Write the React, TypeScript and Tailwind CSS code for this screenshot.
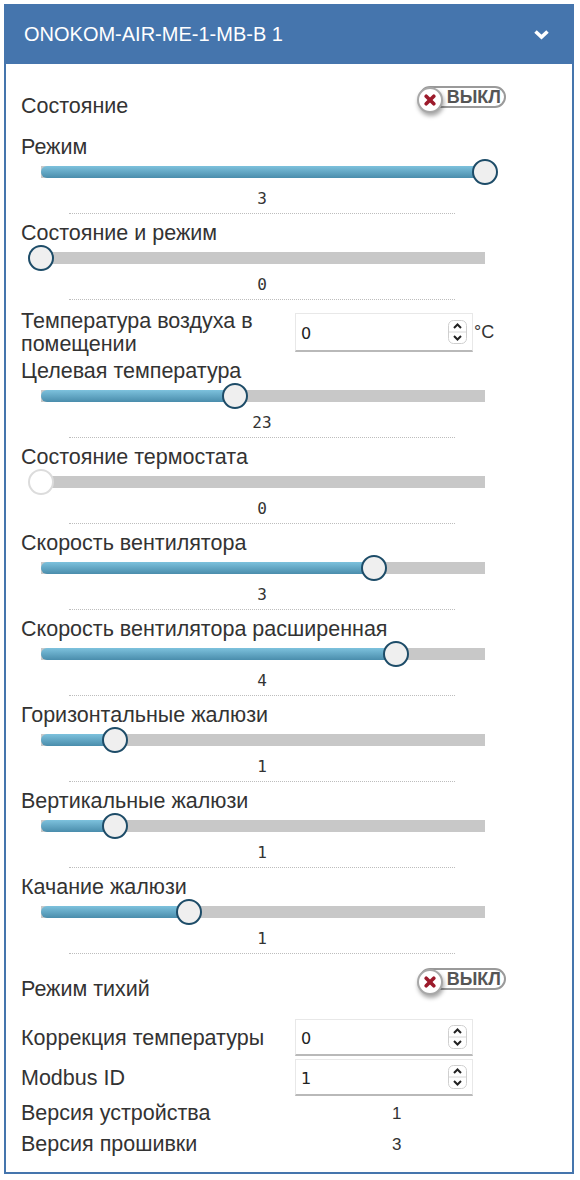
import React from 'react';

type SliderDef = {
  label: string;
  value: number;
  min: number;
  max: number;
  disabled?: boolean;
};

const TRACK = 444;

const topSliders: SliderDef[] = [
  { label: 'Режим', value: 3, min: 0, max: 3 },
  { label: 'Состояние и режим', value: 0, min: 0, max: 3 },
];

const sliders: SliderDef[] = [
  { label: 'Целевая температура', value: 23, min: 16, max: 32 },
  { label: 'Состояние термостата', value: 0, min: 0, max: 1, disabled: true },
  { label: 'Скорость вентилятора', value: 3, min: 0, max: 4 },
  { label: 'Скорость вентилятора расширенная', value: 4, min: 0, max: 5 },
  { label: 'Горизонтальные жалюзи', value: 1, min: 0, max: 6 },
  { label: 'Вертикальные жалюзи', value: 1, min: 0, max: 6 },
  { label: 'Качание жалюзи', value: 1, min: 0, max: 3 },
];

function Slider({ label, value, min, max, disabled }: SliderDef) {
  const pos = Math.round(((value - min) / (max - min)) * TRACK);
  return (
    <div className="mb-[8px]">
      <div className="h-[23px] whitespace-nowrap text-[21.5px] leading-[23px] text-[#333]">{label}</div>
      <div className="relative ml-[20px] h-[26px] w-[444px] pt-[7px]">
        <div className="h-[12px] w-full bg-[#c8c8c8]">
          <div
            className="h-[12px] rounded-l-[6px] bg-gradient-to-b from-[#7dc2dd] to-[#4a8dac]"
            style={{ width: pos }}
          />
        </div>
        {/* thumb */}
        <div
          className={`absolute top-0 -ml-[13px] h-[26px] w-[26px] rounded-full border-2 ${
            disabled ? 'border-[#dcdcdc] bg-white' : 'border-[#1d4c68] bg-[#efefef]'
          }`}
          style={{ left: pos }}
        />
      </div>
      <div className="ml-[48px] mt-[3px] w-[386px] border-b border-dotted border-[#bdbdbd] pb-[3px] text-center font-['DejaVu_Sans_Mono',monospace] text-[16px] leading-[22px] text-[#333]">
        {value}
      </div>
    </div>
  );
}

function Toggle() {
  return (
    <div className="relative h-[27px] w-[89px]">
      <div className="absolute left-[2px] top-0 flex h-[22px] w-[87px] items-center justify-end rounded-full border-2 border-[#9a9a9a] bg-white pr-[3px] text-[18px] font-bold text-[#555]">
        ВЫКЛ
      </div>
      <div className="absolute left-0 top-[1px] flex h-[26px] w-[26px] items-center justify-center rounded-full border-2 border-[#a8a8a8] bg-white shadow-[1px_3px_4px_rgba(0,0,0,0.35)]">
        <svg width="12" height="12" viewBox="0 0 12 12">
          <path d="M2.2 2.2 L9.8 9.8 M9.8 2.2 L2.2 9.8" stroke="#9c1a2b" strokeWidth="3.6" strokeLinecap="round" />
        </svg>
      </div>
    </div>
  );
}

function Spinner() {
  return (
    <svg width="19" height="24" viewBox="0 0 19 24">
      <rect x="0.5" y="0.5" width="18" height="23" rx="5" fill="white" stroke="#cfcfcf" />
      <line x1="1" y1="12" x2="18" y2="12" stroke="#d8d8d8" />
      <path d="M6 8 L9.5 4.5 L13 8" fill="none" stroke="#222" strokeWidth="2" />
      <path d="M6 16 L9.5 19.5 L13 16" fill="none" stroke="#222" strokeWidth="2" />
    </svg>
  );
}

function NumberInput({ value, tall }: { value: string; tall?: boolean }) {
  return (
    <div
      className={`flex w-[178px] items-center justify-between border border-[#e8e8e8] border-b-2 border-b-[#b9b9b9] pl-[5px] pr-[5px] font-['DejaVu_Sans',sans-serif] text-[16px] text-[#222] ${
        tall ? 'h-[39px]' : 'h-[37px]'
      }`}
    >
      <span className="pt-[3px]">{value}</span>
      <Spinner />
    </div>
  );
}

export default function App() {
  return (
    <div className="pl-[4px] pt-[4px] font-['Liberation_Sans',Arial,sans-serif]">
      <div className="w-[570px]">
        {/* Header */}
        <div className="flex h-[60px] items-center justify-between bg-[#4575ad] pl-[20px] pr-[24px]">
          <span className="text-[20px] text-white">ONOKOM-AIR-ME-1-MB-B 1</span>
          <svg width="17" height="11" viewBox="0 0 17 11">
            <path d="M2.5 2.5 L8.5 8 L14.5 2.5" fill="none" stroke="white" strokeWidth="3.6" />
          </svg>
        </div>

        {/* Body */}
        <div className="border-x-2 border-b-2 border-[#4575ad] pb-[12px] pl-[15px] pt-[22px] text-[#333]">
          <div className="flex">
            <div className="w-[396px] pt-[8px] text-[21.5px] leading-[24px]">Состояние</div>
            <Toggle />
          </div>

          <div className="mt-[18px]">
            {topSliders.map((s) => (
              <Slider key={s.label} {...s} />
            ))}
          </div>

          <div className="mb-[4px] flex">
            <div className="w-[274px] pt-[2px] text-[21.5px] leading-[23px]">Температура воздуха в помещении</div>
            <div className="mt-[1px] flex items-center">
              <NumberInput value="0" tall />
              <span className="ml-[1px] text-[18px]">°C</span>
            </div>
          </div>

          {sliders.map((s) => (
            <Slider key={s.label} {...s} />
          ))}

          <div className="mt-[14px] flex">
            <div className="w-[396px] pt-[9px] text-[21.5px] leading-[24px]">Режим тихий</div>
            <Toggle />
          </div>

          <div className="mt-[18px] flex items-center">
            <div className="w-[274px] text-[21.5px] leading-[24px]">Коррекция температуры</div>
            <NumberInput value="0" />
          </div>
          <div className="mt-[3px] flex items-center">
            <div className="w-[274px] text-[21.5px] leading-[24px]">Modbus ID</div>
            <NumberInput value="1" />
          </div>

          <div className="mt-[2px] flex text-[21.5px] leading-[31px]">
            <div className="w-[371px]">Версия устройства</div>
            <div className="text-[17px]">1</div>
          </div>
          <div className="flex text-[21.5px] leading-[31px]">
            <div className="w-[371px]">Версия прошивки</div>
            <div className="text-[17px]">3</div>
          </div>
        </div>
      </div>
    </div>
  );
}
